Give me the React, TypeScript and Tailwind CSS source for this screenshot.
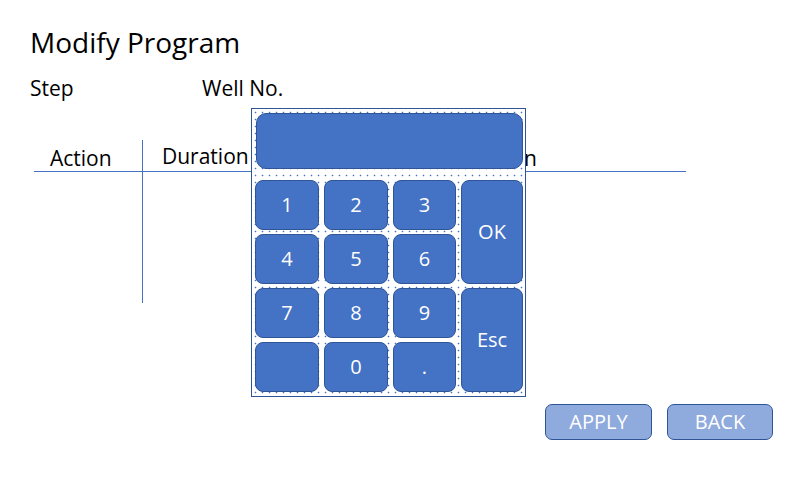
const keys = [
  { label: "1", col: "col-start-1", row: "row-start-1" },
  { label: "2", col: "col-start-2", row: "row-start-1" },
  { label: "3", col: "col-start-3", row: "row-start-1" },
  { label: "4", col: "col-start-1", row: "row-start-2" },
  { label: "5", col: "col-start-2", row: "row-start-2" },
  { label: "6", col: "col-start-3", row: "row-start-2" },
  { label: "7", col: "col-start-1", row: "row-start-3" },
  { label: "8", col: "col-start-2", row: "row-start-3" },
  { label: "9", col: "col-start-3", row: "row-start-3" },
  { label: "", col: "col-start-1", row: "row-start-4" },
  { label: "0", col: "col-start-2", row: "row-start-4" },
  { label: ".", col: "col-start-3", row: "row-start-4" },
  { label: "OK", col: "col-start-4", row: "row-start-1 row-span-2" },
  { label: "Esc", col: "col-start-4", row: "row-start-3 row-span-2" },
];

function Keypad() {
  return (
    <div className="absolute left-[251px] top-[108px] w-[275px] h-[289px] border border-[#2f5597] bg-white bg-[radial-gradient(circle,#4472c4_0.7px,transparent_1.1px)] bg-[length:7px_7px] pt-[4px] pl-[3px] pr-[3px]">
      <div className="ml-[1px] h-[56px] w-[267px] rounded-[10px] border border-[#2f5597] bg-[#4472c4]" />
      <div className="mt-[11px] grid grid-cols-[64px_64px_63px_62px] grid-rows-[50px_50px_50px_50px] gap-x-[5px] gap-y-[4px]">
        {keys.map((k) => (
          <button
            key={k.col + k.row}
            className={`${k.col} ${k.row} flex items-center justify-center rounded-[8px] border border-[#2f5597] bg-[#4472c4] text-[20px] text-white`}
          >
            {k.label}
          </button>
        ))}
      </div>
    </div>
  );
}

export default function App() {
  return (
    <div className="relative w-[800px] h-[480px] overflow-hidden bg-white pl-[30px] text-black font-['Open_Sans',sans-serif]">
      <h1 className="pt-[22px] text-[28px] leading-[40px]">Modify Program</h1>

      <div className="mt-[12px] flex text-[21px] leading-[28px]">
        <span className="w-[172px]">Step</span>
        <span>Well No.</span>
      </div>

      {/* Table */}
      <div className="ml-[4px] mt-[38px] w-[652px] text-[21px]">
        <div className="flex h-[32px] border-b border-[#4472c4] leading-[28px]">
          <div className="w-[109px] border-r border-[#4472c4] pl-[16px] pt-[4px]">Action</div>
          <div className="w-[200px] pl-[19px] pt-[2px]">Duration</div>
          <div className="w-[194px] pt-[4px] text-right">Position</div>
        </div>
        <div className="h-[131px] w-[109px] border-r border-[#4472c4]" />
      </div>

      <div className="mt-[101px] flex justify-end gap-[15px] pr-[27px]">
        <button className="h-[36px] w-[107px] rounded-[7px] border border-[#2f5597] bg-[#8faadc] text-[20px] text-white">APPLY</button>
        <button className="h-[36px] w-[106px] rounded-[7px] border border-[#2f5597] bg-[#8faadc] text-[20px] text-white">BACK</button>
      </div>

      <Keypad />
    </div>
  );
}
